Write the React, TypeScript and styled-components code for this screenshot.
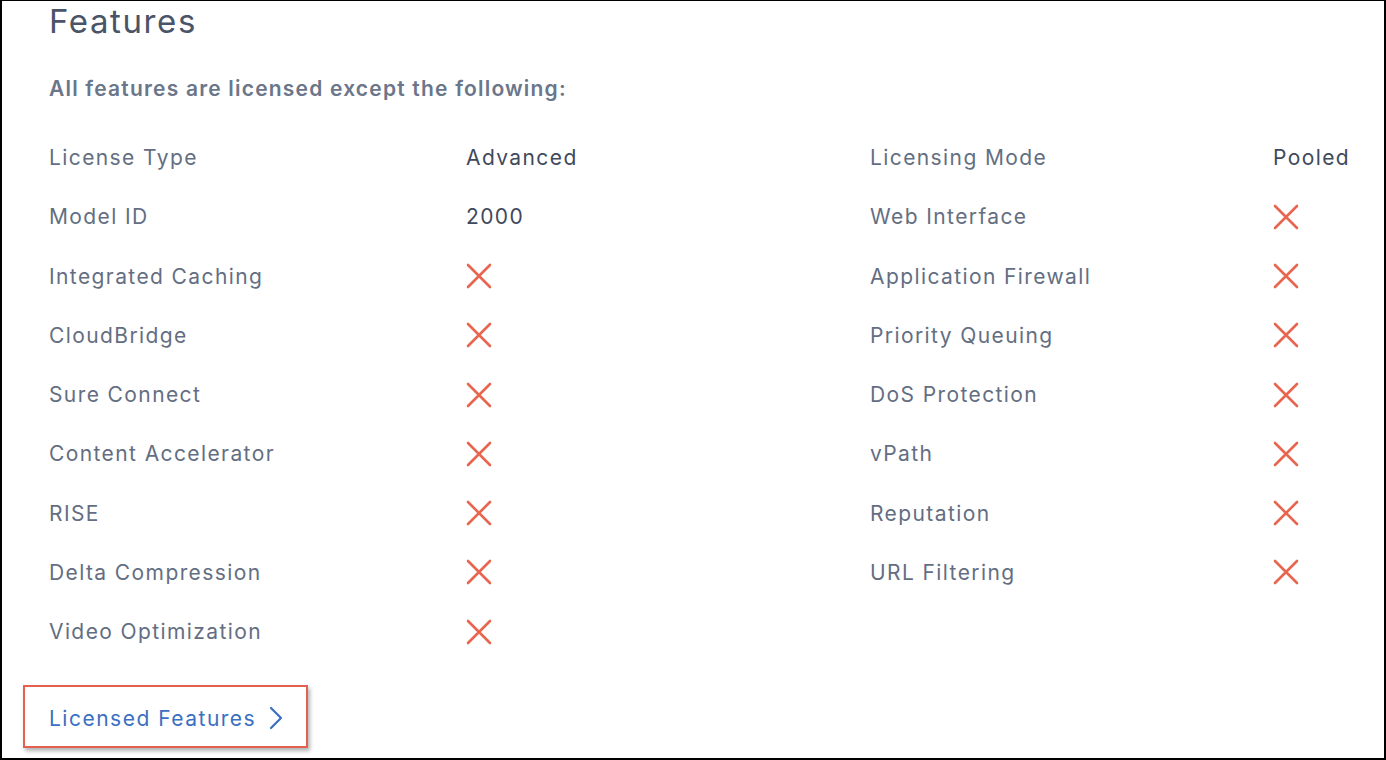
import React from 'react';
import styled, { createGlobalStyle } from 'styled-components';

const GlobalStyle = createGlobalStyle`
    html, body {
        margin: 0;
        padding: 0;
        background: #ffffff;
    }
    body {
        font-family: Inter, 'Noto Sans', sans-serif;
    }
`;

type Cell = { label: string; value?: string };

const left: Cell[] = [
    { label: 'License Type', value: 'Advanced' },
    { label: 'Model ID', value: '2000' },
    { label: 'Integrated Caching' },
    { label: 'CloudBridge' },
    { label: 'Sure Connect' },
    { label: 'Content Accelerator' },
    { label: 'RISE' },
    { label: 'Delta Compression' },
    { label: 'Video Optimization' },
];

const right: Cell[] = [
    { label: 'Licensing Mode', value: 'Pooled' },
    { label: 'Web Interface' },
    { label: 'Application Firewall' },
    { label: 'Priority Queuing' },
    { label: 'DoS Protection' },
    { label: 'vPath' },
    { label: 'Reputation' },
    { label: 'URL Filtering' },
];

const Cross = () => (
    <svg width="26" height="26" viewBox="0 0 26 26" fill="none">
        <path
            d="M2 2 L24 24 M24 2 L2 24"
            stroke="#e8654f"
            strokeWidth="2.6"
            strokeLinecap="round"
        />
    </svg>
);

const Chevron = () => (
    <svg width="18" height="26" viewBox="0 0 18 26" fill="none">
        <path
            d="M5 3 L15 13 L5 23"
            stroke="#3a6fc2"
            strokeWidth="2.2"
            strokeLinecap="round"
            strokeLinejoin="round"
        />
    </svg>
);

const App = () => {
    const rows = Array.from({ length: left.length }, (_, i) => [left[i], right[i]]);
    return (
        <>
            <GlobalStyle />
            <Frame>
                <Title>Features</Title>
                <Subtitle>All features are licensed except the following:</Subtitle>
                <Grid>
                    {rows.map(([a, b], i) => (
                        <React.Fragment key={i}>
                            <Label>{a.label}</Label>
                            <Value>{a.value ? a.value : <Cross />}</Value>
                            <Label>{b ? b.label : ''}</Label>
                            <Value>{b ? b.value ? b.value : <Cross /> : null}</Value>
                        </React.Fragment>
                    ))}
                </Grid>
                <Highlight>
                    <LinkText href="#">
                        Licensed Features
                        <Chevron />
                    </LinkText>
                </Highlight>
            </Frame>
        </>
    );
};

const Frame = styled.div`
    box-sizing: border-box;
    width: 1386px;
    height: 760px;
    border: 2px solid #000000;
    border-top-width: 1px;
    padding: 0 0 0 22px;
    overflow: hidden;
    display: flex;
    flex-direction: column;
`;

const Title = styled.h1`
    margin: 0 0 0 25px;
    font-size: 33px;
    line-height: 40px;
    font-weight: 400;
    letter-spacing: 1.6px;
    color: #4a5468;
`;

const Subtitle = styled.p`
    margin: 36px 0 0 25px;
    font-size: 21px;
    line-height: 24px;
    font-weight: 600;
    letter-spacing: 1.2px;
    color: #6b768a;
`;

const Grid = styled.div`
    display: grid;
    grid-template-columns: 417px 404px 403px auto;
    grid-auto-rows: 59.25px;
    margin: 27px 0 0 25px;
`;

const Label = styled.div`
    display: flex;
    align-items: center;
    font-size: 21px;
    letter-spacing: 1.4px;
    color: #636e82;
`;

const Value = styled.div`
    display: flex;
    align-items: center;
    font-size: 21px;
    letter-spacing: 1.4px;
    color: #3f495c;
`;

const Highlight = styled.div`
    align-self: flex-start;
    margin: 24px 0 0 -1px;
    box-sizing: border-box;
    width: 285px;
    height: 63px;
    border: 2px solid #e4604f;
    box-shadow: 2px 3px 4px rgba(0, 0, 0, 0.3);
    display: flex;
    align-items: center;
    padding: 3px 0 0 24px;
`;

const LinkText = styled.a`
    display: flex;
    align-items: center;
    gap: 10px;
    font-size: 21px;
    letter-spacing: 1.5px;
    color: #3a6fc2;
    text-decoration: none;
`;

export default App;
